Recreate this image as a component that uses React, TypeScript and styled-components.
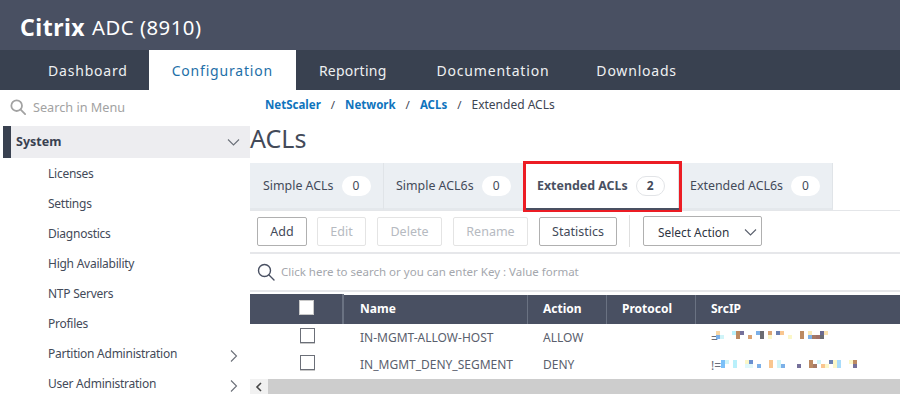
import React from "react";
import styled, { createGlobalStyle } from "styled-components";

const Global = createGlobalStyle`
  html, body { margin: 0; padding: 0; background: #fff; overflow: hidden; }
  body { font-family: "Noto Sans", "Open Sans", sans-serif; font-size: 12px; color: #4a5263; }
  * { box-sizing: border-box; }
`;

const Page = styled.div`
  width: 900px;
  height: 400px;
  overflow: hidden;
  display: flex;
  flex-direction: column;
`;
const Brand = styled.header`
  height: 50px;
  flex: none;
  background: #495062;
  color: #fff;
  padding: 3px 0 0 20px;
  display: flex;
  align-items: center;
  gap: 7px;
  font-size: 20.3px;
  letter-spacing: 0.5px;
`;
const BrandStrong = styled.strong`
  font-size: 23px;
  font-weight: 700;
`;
const Nav = styled.nav`
  height: 40px;
  flex: none;
  background: #394150;
  display: flex;
  padding-left: 25px;
`;
const NavItem = styled.div<{ $active?: boolean; $pr?: number; $ls?: number }>`
  padding: 0 ${(p) => p.$pr ?? 23}px 0 23px;
  display: flex;
  align-items: center;
  font-size: 14px;
  letter-spacing: ${(p) => p.$ls ?? 0.8}px;
  color: ${(p) => (p.$active ? "#1e6fa8" : "#eef0f2")};
  background: ${(p) => (p.$active ? "#fff" : "transparent")};
`;
const Body = styled.div`
  flex: 1;
  display: flex;
  min-height: 0;
`;
const Sidebar = styled.aside`
  width: 250px;
  flex: none;
  padding-top: 4px;
`;
const MenuSearch = styled.div`
  height: 32px;
  padding: 0 0 6px 10px;
  display: flex;
  align-items: center;
  gap: 7px;
  color: #a2a2a2;
  font-size: 12.7px;
`;
const SystemRow = styled.div`
  margin-left: 3px;
  height: 32px;
  background: #ededf0;
  border-left: 8px solid #394150;
  padding: 0 10px 1px 5px;
  display: flex;
  align-items: center;
  justify-content: space-between;
  font-weight: 700;
  font-size: 12.5px;
  color: #394150;
`;
const MenuList = styled.div`
  padding-top: 0;
`;
const MenuItem = styled.div`
  height: 30px;
  padding: 0 11px 0 48px;
  display: flex;
  align-items: center;
  justify-content: space-between;
  font-size: 12px;
  letter-spacing: -0.25px;
  color: #434a59;
`;
const Content = styled.main`
  flex: 1;
  min-width: 0;
  display: flex;
  flex-direction: column;
`;
const Crumbs = styled.div`
  height: 30px;
  flex: none;
  padding: 0 0 1px 15px;
  display: flex;
  align-items: center;
  gap: 10px;
  font-size: 11.5px;
  color: #3d4452;
`;
const Crumb = styled.span`
  color: #0f74bd;
  font-weight: 700;
`;
const CrumbCurrent = styled.span`
  font-size: 12px;
`;
const Title = styled.h1`
  margin: 0;
  height: 43px;
  flex: none;
  font-size: 25px;
  font-weight: 400;
  line-height: 37px;
  color: #434a59;
`;
const TabBar = styled.div`
  height: 48px;
  flex: none;
  display: flex;
  border-bottom: 1px solid #e4e6e9;
`;
const Tab = styled.div<{ $w: number; $pad?: number; $active?: boolean }>`
  width: ${(p) => p.$w}px;
  flex: none;
  position: relative;
  padding-left: ${(p) => p.$pad ?? 12}px;
  display: flex;
  align-items: center;
  gap: 8px;
  font-size: 12.4px;
  font-weight: ${(p) => (p.$active ? 700 : 400)};
  color: ${(p) => (p.$active ? "#495062" : "#434a59")};
  background: ${(p) => (p.$active ? "#fff" : "#ebeff3")};
  border-right: 1px solid #e0e4e8;
  border-bottom: 2px solid #e4e8ec;
`;
const Highlight = styled.div`
  position: absolute;
  z-index: 1;
  left: -3px;
  right: -4px;
  top: -2px;
  bottom: -4px;
  border: 3px solid #ec1c24;
  border-bottom-width: 2px;
  box-shadow: inset 0 -2px 0 #495062;
  pointer-events: none;
`;
const Count = styled.span<{ $active?: boolean }>`
  width: 29px;
  height: 20px;
  border-radius: 10px;
  background: #fff;
  border: 1px solid ${(p) => (p.$active ? "#e2e4e7" : "transparent")};
  display: flex;
  align-items: center;
  justify-content: center;
  font-size: 12px;
  color: #434a59;
`;
const Toolbar = styled.div`
  height: 43px;
  flex: none;
  display: flex;
  align-items: center;
  padding: 0 0 1px 7px;
  border-bottom: 2px solid #e6e7ea;
`;
const Btn = styled.div<{ $w: number; $off?: boolean; $gap?: number }>`
  width: ${(p) => p.$w}px;
  height: 29px;
  margin-right: ${(p) => p.$gap ?? 11}px;
  border: 1px solid ${(p) => (p.$off ? "#e4e4e4" : "#b0b0b0")};
  border-radius: 2px;
  display: flex;
  align-items: center;
  justify-content: center;
  font-size: 12.5px;
  color: ${(p) => (p.$off ? "#b6bac1" : "#434a59")};
`;
const Sep = styled.div`
  width: 1px;
  height: 32px;
  background: #dfdfdf;
  margin: 0 13px 0 1px;
`;
const Select = styled.div`
  width: 119px;
  height: 30px;
  border: 1px solid #b0b0b0;
  border-radius: 2px;
  padding: 1px 4px 0 14px;
  display: flex;
  align-items: center;
  justify-content: space-between;
  font-size: 11.9px;
  color: #2f3542;
`;
const SearchBar = styled.div`
  height: 38px;
  flex: none;
  display: flex;
  align-items: center;
  gap: 6px;
  padding: 0 0 1px 7px;
  font-size: 11.5px;
  color: #a4a7ad;
  border-bottom: 2px solid #e6e7ea;
`;
const TableWrap = styled.div`
  margin-top: 3px;
  flex: none;
`;
const Table = styled.div`
  display: grid;
  grid-template-columns: 94px 184px 79px 89px 1fr;
`;
const HeadCheck = styled.div`
  height: 30px;
  margin-top: -1px;
  margin-bottom: 1px;
  background: #495062;
  border-right: 2px solid #6a7282;
  padding: 6px 0 0 49px;
`;
const HeadCell = styled.div<{ $last?: boolean; $pad?: number }>`
  height: 29px;
  background: #495062;
  border-right: ${(p) => (p.$last ? "none" : "1px solid #6a7282")};
  padding: 0 0 2px ${(p) => p.$pad ?? 15}px;
  display: flex;
  align-items: center;
  font-size: 12px;
  font-weight: 700;
  color: #fff;
`;
const Box = styled.span<{ $head?: boolean }>`
  width: 15px;
  height: 15px;
  display: block;
  background: #fff;
  border: 1px solid ${(p) => (p.$head ? "#c9c9c9" : "#6b6f78")};
  box-shadow: ${(p) => (p.$head ? "none" : "0 1px 0 #c8c8c8")};
`;
const CheckCell = styled.div`
  height: 27px;
  padding: 3px 0 0 50px;
`;
const Cell = styled.div<{ $pad?: number }>`
  height: 27px;
  padding: 0 0 2px ${(p) => p.$pad ?? 15}px;
  display: flex;
  align-items: center;
  font-size: 12px;
  color: #5a606d;
  white-space: nowrap;
`;
const IpCell = styled(Cell)`
  padding-bottom: 0;
  color: #6a6f7a;
`;
const BlurSvg = styled.svg<{ $shift: number }>`
  flex: none;
  margin-left: ${(p) => p.$shift}px;
`;
const ScrollBar = styled.div`
  height: 15px;
  display: flex;
  background: #cdcdcd;
`;
const ScrollBtn = styled.div`
  width: 18px;
  background: #f1f1f1;
  display: flex;
  align-items: center;
  justify-content: center;
`;
const RightChevron = styled.svg`
  margin-top: 6px;
`;

const Search = ({ size, color, sw }: { size: number; color: string; sw: number }) => (
  <svg width={size} height={size} viewBox="0 0 18 18" fill="none" stroke={color} strokeWidth={sw}>
    <circle cx="7.5" cy="7.5" r="6" />
    <path d="M12 12l5 5" strokeLinecap="round" />
  </svg>
);
const ChevDown = ({ color = "#6b7079" }: { color?: string }) => (
  <svg width="13" height="8" viewBox="0 0 13 8" fill="none" stroke={color} strokeWidth="1.1">
    <path d="M1 1.5l5.5 5.5 5.5-5.5" />
  </svg>
);
const ChevRight = () => (
  <RightChevron width="10" height="14" viewBox="0 0 10 14" fill="none" stroke="#6b7079" strokeWidth="1.1">
    <path d="M2 1.5l5.5 5.5L2 12.5" />
  </RightChevron>
);
type B = [number, number, string];
const Blur = ({ cells, shift }: { cells: B[]; shift: number }) => (
  <BlurSvg $shift={shift} width="140" height="15" viewBox="0 0 140 15" shapeRendering="crispEdges">
    {cells.map(([x, y, c], i) => (
      <rect key={i} x={x} y={y} width="4" height="4" fill={c} />
    ))}
  </BlurSvg>
);
const ip1: B[] = [
  [0, 0, "#f9d7a5"], [0, 4, "#7cb0e8"], [4, 4, "#d0f4f8"], [16, 0, "#b9f0fb"], [20, 0, "#bc8a62"], [24, 0, "#75709a"], [20, 4, "#bc8a62"],
  [32, 4, "#d9a273"], [40, 0, "#7cb0e8"], [44, 0, "#6b6b70"], [44, 4, "#6b6b70"], [52, 0, "#d9a273"], [52, 4, "#fbf7c8"],
  [60, 0, "#6a80b0"], [64, 0, "#f9c690"], [72, 4, "#fbf7c8"], [84, 0, "#bc8a62"], [84, 4, "#bc8a62"], [92, 0, "#fbeab5"], [92, 4, "#7cb0e8"],
  [96, 4, "#a57a66"], [100, 4, "#a07068"], [104, 0, "#6a6a90"], [104, 4, "#6b6b70"], [108, 0, "#fbe2b0"],
];
const ip2: B[] = [
  [0, 2, "#7cc0f8"], [0, 6, "#7cc0f8"], [4, 2, "#d0f4f8"], [12, 2, "#b9f0fb"], [12, 6, "#b9f0fb"], [24, 2, "#fbf7c8"], [28, 2, "#6a90d0"],
  [24, 6, "#e0f8fb"], [28, 6, "#e0f8fb"], [36, 6, "#7cb0e8"], [48, 2, "#f9c690"], [48, 6, "#f9c690"], [56, 2, "#d0f4f8"], [56, 6, "#d0f4f8"],
  [60, 6, "#7cb0e8"], [76, 6, "#75709a"], [88, 2, "#bc8a62"], [88, 6, "#bc8a62"], [92, 6, "#a57a66"], [96, 2, "#d0f4f8"], [100, 6, "#f9c690"],
  [104, 6, "#fbf7c8"], [108, 2, "#6a80b0"], [112, 2, "#fbf7c8"], [112, 6, "#fbf7c8"], [116, 2, "#a8dcfb"], [116, 6, "#a8dcfb"],
  [128, 2, "#fbf7c8"], [132, 2, "#bc8a62"], [132, 6, "#75709a"],
];

const menu = ["Licenses", "Settings", "Diagnostics", "High Availability", "NTP Servers", "Profiles"];

export default function App() {
  return (
    <Page>
      <Global />
      <Brand>
        <BrandStrong>Citrix</BrandStrong>
        <span>ADC (8910)</span>
      </Brand>
      <Nav>
        <NavItem $pr={21}>Dashboard</NavItem>
        <NavItem $active>Configuration</NavItem>
        <NavItem $pr={27} $ls={0.25}>Reporting</NavItem>
        <NavItem $pr={24}>Documentation</NavItem>
        <NavItem>Downloads</NavItem>
      </Nav>
      <Body>
        <Sidebar>
          <MenuSearch>
            <Search size={16} color="#a2a2a2" sw={2} />
            Search in Menu
          </MenuSearch>
          <SystemRow>
            System
            <ChevDown />
          </SystemRow>
          <MenuList>
            {menu.map((m) => (
              <MenuItem key={m}>{m}</MenuItem>
            ))}
            <MenuItem>
              Partition Administration
              <ChevRight />
            </MenuItem>
            <MenuItem>
              User Administration
              <ChevRight />
            </MenuItem>
          </MenuList>
        </Sidebar>
        <Content>
          <Crumbs>
            <Crumb>NetScaler</Crumb>/<Crumb>Network</Crumb>/<Crumb>ACLs</Crumb>/<CrumbCurrent>Extended ACLs</CrumbCurrent>
          </Crumbs>
          <Title>ACLs</Title>
          <TabBar>
            <Tab $w={134} $pad={13}>
              Simple ACLs<Count>0</Count>
            </Tab>
            <Tab $w={142}>
              Simple ACL6s<Count>0</Count>
            </Tab>
            <Tab $w={153} $pad={11} $active>
              Extended ACLs<Count $active>2</Count>
              <Highlight />
            </Tab>
            <Tab $w={154} $pad={11}>
              Extended ACL6s<Count>0</Count>
            </Tab>
          </TabBar>
          <Toolbar>
            <Btn $w={50} $gap={10}>Add</Btn>
            <Btn $w={49} $off>Edit</Btn>
            <Btn $w={65} $off>Delete</Btn>
            <Btn $w={75} $off>Rename</Btn>
            <Btn $w={78}>Statistics</Btn>
            <Sep />
            <Select>
              Select Action
              <ChevDown color="#5a606d" />
            </Select>
          </Toolbar>
          <SearchBar>
            <Search size={18} color="#495062" sw={1.4} />
            Click here to search or you can enter Key : Value format
          </SearchBar>
          <TableWrap>
            <Table>
              <HeadCheck><Box $head /></HeadCheck>
              <HeadCell $pad={16}>Name</HeadCell>
              <HeadCell>Action</HeadCell>
              <HeadCell>Protocol</HeadCell>
              <HeadCell $last>SrcIP</HeadCell>
              <CheckCell><Box /></CheckCell>
              <Cell $pad={16}>IN-MGMT-ALLOW-HOST</Cell>
              <Cell>ALLOW</Cell>
              <Cell />
              <IpCell>=<Blur cells={ip1} shift={-2} /></IpCell>
              <CheckCell><Box /></CheckCell>
              <Cell $pad={16}>IN_MGMT_DENY_SEGMENT</Cell>
              <Cell>DENY</Cell>
              <Cell />
              <IpCell>!=<Blur cells={ip2} shift={0} /></IpCell>
            </Table>
            <ScrollBar>
              <ScrollBtn>
                <svg width="8" height="10" viewBox="0 0 8 10" fill="none" stroke="#444" strokeWidth="1.6">
                  <path d="M6 1L2 5l4 4" />
                </svg>
              </ScrollBtn>
            </ScrollBar>
          </TableWrap>
        </Content>
      </Body>
    </Page>
  );
}
